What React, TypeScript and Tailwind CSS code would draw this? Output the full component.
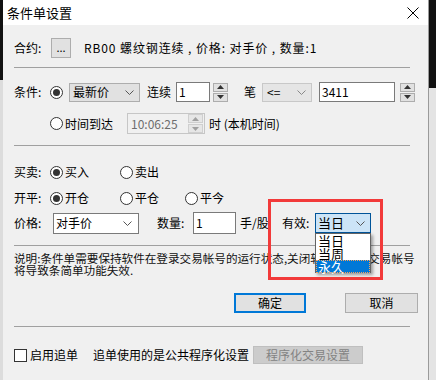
import React from "react";

const font = { fontFamily: '"Noto Sans CJK SC", "Microsoft YaHei", sans-serif' };

function Radio({ checked }: { checked?: boolean }) {
  return (
    <span className="w-[13px] h-[13px] rounded-full border border-[#333] bg-white flex items-center justify-center shrink-0">
      {checked && <span className="w-[7px] h-[7px] rounded-full bg-[#333]" />}
    </span>
  );
}

function Chevron({ color = "#555" }: { color?: string }) {
  return (
    <svg width="9" height="5" viewBox="0 0 9 5" className="shrink-0">
      <path d="M0.5 0.5 L4.5 4.5 L8.5 0.5" fill="none" stroke={color} strokeWidth="1" />
    </svg>
  );
}

function Spinner({ disabled }: { disabled?: boolean }) {
  const c = disabled ? "#a0a0a0" : "#333";
  const box = disabled
    ? "h-[9px] border border-[#cfcfcf] bg-[#e6e6e6] flex items-center justify-center"
    : "h-[9px] border border-[#adadad] bg-[#e1e1e1] flex items-center justify-center";
  return (
    <div className="flex flex-col gap-[1px] w-[15px]">
      <div className={box}>
        <svg width="7" height="4" viewBox="0 0 7 4"><path d="M3.5 0 L7 4 L0 4 Z" fill={c} /></svg>
      </div>
      <div className={box}>
        <svg width="7" height="4" viewBox="0 0 7 4"><path d="M0 0 L7 0 L3.5 4 Z" fill={c} /></svg>
      </div>
    </div>
  );
}

function Sep() {
  return <div className="w-[396px] h-px bg-[#a0a0a0]" />;
}

export default function App() {
  return (
    <div className="w-[436px] h-[380px] flex overflow-hidden text-[12px] text-black" style={font}>
      {/* background window strips */}
      <div className="w-[3px] flex flex-col">
        <div className="h-[80px] bg-[#111]" />
        <div className="flex-1 bg-[#dcdcdc]" />
      </div>

      <div className="w-[426px] flex flex-col bg-[#f0f0f0] relative border-r border-[#9a9a9a]">
        {/* Title bar */}
        <div className="h-[25px] bg-white flex items-center justify-between pl-[4px] pr-[9px]">
          <span className="text-[13px] leading-none">条件单设置</span>
          <svg width="12" height="12" viewBox="0 0 12 12">
            <path d="M0.5 0.5 L11.5 11.5 M11.5 0.5 L0.5 11.5" stroke="#000" strokeWidth="1" />
          </svg>
        </div>

        <div className="flex flex-col pl-[11px] whitespace-nowrap">
          {/* 合约 */}
          <div className="mt-[12px] h-[21px] flex items-center">
            <span className="w-[30px]">合约:</span>
            <div className="ml-[7px] w-[20px] h-[20px] border border-[#adadad] bg-[#e1e1e1] flex items-center justify-center text-[11px] leading-none">
              ...
            </div>
            <span className="ml-[13px] tracking-[0.9px]">RB00 螺纹钢连续 , 价格: 对手价 , 数量:1</span>
          </div>

          <div className="mt-[9px]"><Sep /></div>

          {/* 条件 row 1 */}
          <div className="mt-[14px] h-[20px] flex items-center">
            <span className="w-[30px]">条件:</span>
            <span className="ml-[6px]"><Radio checked /></span>
            <div className="ml-[6px] w-[71px] h-[19px] border border-[#adadad] bg-[#e1e1e1] flex items-center justify-between pl-[3px] pr-[5px]">
              <span>最新价</span>
              <Chevron />
            </div>
            <span className="ml-[7px]">连续</span>
            <div className="ml-[5px] w-[34px] h-[20px] border border-[#7a7a7a] bg-white flex items-center pl-[2px]">1</div>
            <span className="ml-[3px]"><Spinner /></span>
            <span className="ml-[16px]">笔</span>
            <div className="ml-[6px] w-[50px] h-[19px] border border-[#c8c8c8] bg-[#e5e5e5] flex items-center justify-between pl-[4px] pr-[5px]">
              <span>&lt;=</span>
              <Chevron color="#888" />
            </div>
            <div className="ml-[7px] w-[76px] h-[20px] border border-[#7a7a7a] bg-white flex items-center pl-[2px]">3411</div>
            <span className="ml-[5px]"><Spinner /></span>
          </div>

          {/* 条件 row 2 */}
          <div className="mt-[11px] h-[21px] flex items-center">
            <span className="ml-[36px]"><Radio /></span>
            <span className="ml-[2px]">时间到达</span>
            <div className="ml-[14px] w-[78px] h-[21px] border border-[#c6c6c6] bg-[#f0f0f0] flex items-center justify-between pl-[3px] pr-[1px]">
              <span className="text-[#6d6d6d]">10:06:25</span>
              <Spinner disabled />
            </div>
            <span className="ml-[4px]">时 (本机时间)</span>
          </div>

          <div className="mt-[11px]"><Sep /></div>

          {/* 买卖 */}
          <div className="mt-[16px] h-[20px] flex items-center">
            <span className="w-[30px]">买卖:</span>
            <span className="ml-[6px]"><Radio checked /></span>
            <span className="ml-[2px]">买入</span>
            <span className="ml-[31px]"><Radio /></span>
            <span className="ml-[2px]">卖出</span>
          </div>

          {/* 开平 */}
          <div className="mt-[6px] h-[20px] flex items-center">
            <span className="w-[30px]">开平:</span>
            <span className="ml-[6px]"><Radio checked /></span>
            <span className="ml-[2px]">开仓</span>
            <span className="ml-[31px]"><Radio /></span>
            <span className="ml-[2px]">平仓</span>
            <span className="ml-[26px]"><Radio /></span>
            <span className="ml-[2px]">平今</span>
          </div>

          {/* 价格 */}
          <div className="mt-[4px] h-[22px] flex items-center">
            <span className="w-[30px]">价格:</span>
            <div className="ml-[9px] w-[86px] h-[21px] border border-[#7a7a7a] bg-white flex items-center justify-between pl-[2px] pr-[6px]">
              <span>对手价</span>
              <Chevron />
            </div>
            <span className="ml-[18px] w-[32px]">数量:</span>
            <div className="ml-[4px] w-[43px] h-[22px] border border-[#7a7a7a] bg-white flex items-center pl-[2px]">1</div>
            <span className="ml-[4px] w-[30px]">手/股</span>
            <span className="ml-[12px] w-[33px]">有效:</span>
            <div className="w-[56px] h-[20px] border border-[#005499] bg-[#cce4f7] flex items-center justify-between pl-[2px] pr-[5px]">
              <span className="text-[13px]">当日</span>
              <Chevron />
            </div>
          </div>

          <div className="mt-[11px]"><Sep /></div>

          {/* 说明 */}
          <div className="mt-[6px] leading-[12px] text-[11.6px] text-[#111]">
            说明:条件单需要保持软件在登录交易帐号的运行状态,关闭软件或退出交易帐号
            <br />
            将导致条简单功能失效.
          </div>

          {/* buttons */}
          <div className="mt-[17px] h-[20px] flex items-center">
            <div className="ml-[220px] w-[72px] h-[20px] border-2 border-[#0078d7] bg-[#e1e1e1] flex items-center justify-center">确定</div>
            <div className="ml-[39px] w-[73px] h-[20px] border border-[#adadad] bg-[#e1e1e1] flex items-center justify-center">取消</div>
          </div>

          <div className="mt-[13px]"><Sep /></div>

          {/* bottom */}
          <div className="mt-[19px] h-[18px] flex items-center">
            <span className="w-[13px] h-[13px] border border-[#333] bg-white" />
            <span className="ml-[3px]">启用追单</span>
            <span className="ml-[15px]">追单使用的是公共程序化设置</span>
            <div className="ml-[4px] w-[110px] h-[18px] border border-[#bfbfbf] bg-[#cccccc] flex items-center justify-center text-[#838383]">
              程序化交易设置
            </div>
          </div>
        </div>

        {/* open dropdown list */}
        <div className="absolute left-[312px] top-[233px] w-[56px] h-[40px] border border-[#646464] bg-white shadow-[2px_2px_3px_rgba(0,0,0,0.35)] flex flex-col text-[13px] leading-[13px]">
          <div className="h-[13px] pl-[2px]">当日</div>
          <div className="h-[13px] pl-[2px]">当周</div>
          <div className="h-[13px] pl-[2px] bg-[#0078d7] text-white outline-1 outline-dotted outline-[#f7a35c] -outline-offset-1">永久</div>
        </div>

        {/* red highlight box */}
        <div className="absolute left-[265px] top-[199px] w-[115px] h-[81px] border-[3px] border-[#f23a3a]" />
      </div>

      <div className="w-[7px] flex flex-col">
        <div className="h-[88px] bg-[#111]" />
        <div className="flex-1 bg-[#e4e4e4]" />
      </div>
    </div>
  );
}
